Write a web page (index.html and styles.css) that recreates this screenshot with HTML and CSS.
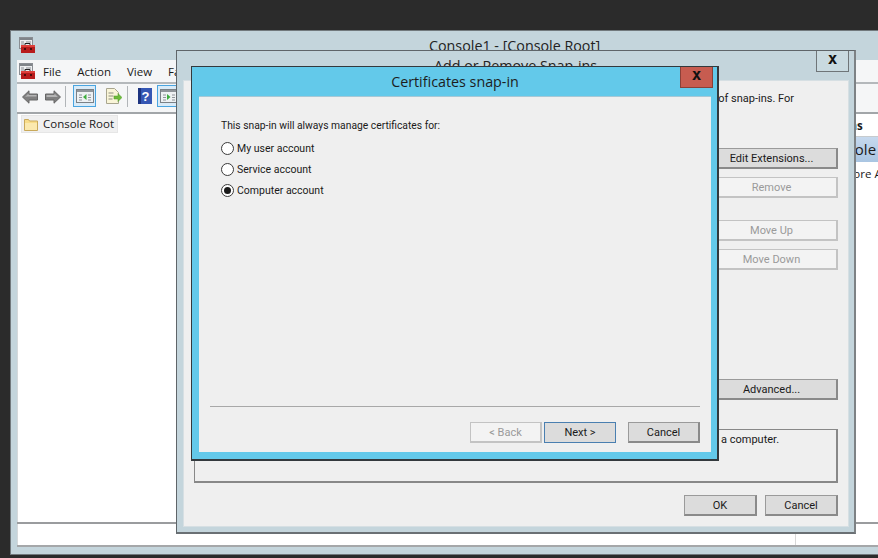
FILE: index.html
```html
<!DOCTYPE html>
<html lang="en">
<head>
<meta charset="utf-8">
<title>Certificates snap-in</title>
<link rel="stylesheet" href="styles.css">
</head>
<body>
<svg class="defs" width="0" height="0" aria-hidden="true">
  <symbol id="mmc" viewBox="0 0 16 16">
    <rect x="0.500" y="0.500" width="13" height="11" fill="#eceef0" stroke="#8a8e93"/>
    <rect x="1" y="1" width="12" height="2" fill="#7f8489"/>
    <path d="M2 5h3M2 7h3M2 9h3M7 5h5" stroke="#8a8e93"/>
    <path d="M6 8.500v-2h5v2" fill="none" stroke="#222"/>
    <rect x="2" y="8" width="14" height="8" fill="#b81c1c"/>
    <rect x="2" y="8" width="14" height="2" fill="#dd3f3a"/>
    <rect x="5" y="11" width="2" height="2" fill="#4a0d0d"/>
    <rect x="11" y="11" width="2" height="2" fill="#4a0d0d"/>
  </symbol>
  <symbol id="paneicon" viewBox="0 0 18 14">
    <rect x="0.500" y="0.500" width="17" height="13" fill="#eef1f3" stroke="#7b8186"/>
    <rect x="1" y="1" width="16" height="2" fill="#8f959a"/>
    <path d="M3 6h3M3 8.500h3M3 11h3M12 6h3M12 8.500h3M12 11h3" stroke="#8f959a"/>
  </symbol>
</svg>

<section class="window main-window">
  <header class="main-title">
    <svg class="icon16" aria-hidden="true"><use href="#mmc"/></svg>
    <h1 class="main-title-text">Console1 - [Console Root]</h1>
  </header>
  <div class="client">
    <nav class="menubar">
      <svg class="icon16 menu-icon" aria-hidden="true"><use href="#mmc"/></svg>
      <span class="menu-item">File</span>
      <span class="menu-item">Action</span>
      <span class="menu-item">View</span>
      <span class="menu-item">Favorites</span>
    </nav>
    <div class="toolbar">
      <svg class="arrow" viewBox="0 0 16 14" aria-hidden="true"><path d="M0.500 7 7 0.800v3.200h8.500v6H7v3.200z" fill="#808080" stroke="#666"/><path d="M3 7 6.500 3.500V5h8v1.500H5z" fill="#b4b4b4"/></svg>
      <svg class="arrow arrow-next" viewBox="0 0 16 14" aria-hidden="true"><path d="M15.500 7 9 0.800v3.200H0.500v6H9v3.200z" fill="#808080" stroke="#666"/><path d="M1.500 5h8V3.500L13 7H1.500z" fill="#b4b4b4"/></svg>
      <span class="tool-sep sep-a"></span>
      <span class="tool-btn">
        <svg class="pane-svg" viewBox="0 0 18 14" aria-hidden="true"><use href="#paneicon"/><path d="M10.500 5v6L7 8z" fill="#3fae3f"/></svg>
      </span>
      <svg class="doc" viewBox="0 0 17 17" aria-hidden="true"><path d="M1.500 0.500h8l4 4v11h-12z" fill="#f9f5d8" stroke="#a9a68f"/><path d="M3.500 5h5M3.500 8h5M3.500 11h4" stroke="#8d8d80"/><path d="M9 8h4V5.500l4 4-4 4V11H9z" fill="#6dbb3a" stroke="#4d9a24" stroke-width="0.500"/></svg>
      <span class="tool-sep sep-b"></span>
      <svg class="help" viewBox="0 0 14 16" aria-hidden="true"><rect width="14" height="16" fill="#3557b4"/><rect x="0" width="3" height="16" fill="#1d3480"/><text x="7.500" y="13" class="help-mark">?</text></svg>
      <span class="tool-btn tool-btn-b">
        <svg class="pane-svg" viewBox="0 0 18 14" aria-hidden="true"><use href="#paneicon"/><path d="M7 5v6l3.500-3z" fill="#3fae3f"/></svg>
      </span>
    </div>
    <div class="panes">
      <div class="tree">
        <div class="tree-item">
          <svg class="folder" viewBox="0 0 14 13" aria-hidden="true"><path d="M0.500 12.500V1.500h4l1 1.500h8v9.500z" fill="#f8dd8a" stroke="#c9a95a"/><path d="M1 5h12v7H1z" fill="#fbe9ae"/></svg>
          <span>Console Root</span>
        </div>
      </div>
      <aside class="actions">
        <div class="actions-head">Actions</div>
        <div class="actions-row">Console Root</div>
        <div class="actions-more">More Actions</div>
      </aside>
    </div>
    <footer class="status"><span class="status-cell"></span></footer>
  </div>
</section>

<section class="window dialog-addremove">
  <header class="dlg-title">
    <h2 class="dlg-title-text">Add or Remove Snap-ins</h2>
    <span class="close close-plain">x</span>
  </header>
  <div class="dlg-client">
    <p class="intro">of snap-ins. For</p>
    <div class="side-buttons">
      <span class="btn btn-wide">Edit Extensions...</span>
      <span class="btn btn-wide btn-off">Remove</span>
      <span class="btn btn-wide btn-off gap-up">Move Up</span>
      <span class="btn btn-wide btn-off gap-down">Move Down</span>
      <span class="btn btn-wide gap-adv">Advanced...</span>
    </div>
    <div class="info-box"><span>a computer.</span></div>
    <div class="dlg-foot">
      <span class="btn">OK</span>
      <span class="btn">Cancel</span>
    </div>
  </div>
</section>

<section class="window dialog-snapin">
  <header class="dlg-title snapin-title">
    <h2 class="snapin-title-text">Certificates snap-in</h2>
    <span class="close close-red">x</span>
  </header>
  <div class="snapin-client">
    <p class="lead">This snap-in will always manage certificates for:</p>
    <div class="radios">
      <div class="radio-row"><span class="radio"></span><span>My user account</span></div>
      <div class="radio-row"><span class="radio"></span><span>Service account</span></div>
      <div class="radio-row"><span class="radio radio-on"></span><span>Computer account</span></div>
    </div>
    <div class="wizard-foot">
      <span class="btn btn-wiz btn-off btn-back">&lt; Back</span>
      <span class="btn btn-wiz btn-default">Next &gt;</span>
      <span class="btn btn-wiz btn-cancel">Cancel</span>
    </div>
  </div>
</section>
</body>
</html>
```

FILE: styles.css
```css
* { box-sizing: border-box; }
html, body { margin: 0; padding: 0; }
body {
  width: 878px;
  height: 558px;
  overflow: hidden;
  position: relative;
  background: #2b2b2b;
  font-family: "Open Sans", "Noto Sans", sans-serif;
  font-size: 11.5px;
  color: #1a1a1a;
}
h1, h2, p { margin: 0; font-weight: 400; }
.defs { position: absolute; }
.icon16 { width: 16px; height: 16px; display: block; flex: none; }

.window { position: absolute; display: flex; flex-direction: column; }

/* Main console window */
.main-window {
  left: 10px; top: 30px; width: 868px; height: 525px;
  background: #c4d5dc;
  border: 1px solid #72797d;
  border-right: 0;
  padding-left: 6px;
}
.main-title { height: 29px; position: relative; padding: 6px 0 0 2px; flex: none; }
.main-title-text { position: absolute; left: 412px; top: 5px; font-size: 14.3px; white-space: nowrap; color: #222; }
.client { display: flex; flex-direction: column; height: 487px; background: #fff; }
.menubar {
  height: 24px; flex: none; display: flex; align-items: center;
  background: #f5f6f7; border-bottom: 2px solid #b4b8bb;
  padding: 0 0 0 2px; gap: 16px; white-space: nowrap; overflow: hidden;
}
.menu-icon { margin-right: -8px; }
.toolbar {
  height: 30px; flex: none; display: flex; align-items: center;
  background: #f5f6f7; border-bottom: 2px solid #a2a6a9;
  padding: 0 0 4px 5px;
}
.arrow { width: 16px; height: 14px; flex: none; margin-top: 2px; }
.arrow-next { margin-left: 7px; }
.tool-sep { width: 1px; height: 21px; background: #b1b5b8; flex: none; }
.sep-a { margin-left: 4px; }
.sep-b { margin-left: 5px; }
.tool-btn {
  width: 23px; height: 22px; flex: none; margin-left: 7px;
  display: flex; align-items: center; justify-content: center;
  background: #d9ebf8; border: 1px solid #4aa5e0;
}
.tool-btn-b { margin-left: 5px; }
.pane-svg { width: 18px; height: 14px; }
.doc { width: 17px; height: 17px; flex: none; margin-left: 9px; }
.help { width: 14px; height: 16px; flex: none; margin-left: 10px; }
.help-mark { font: 700 13px "Liberation Sans", sans-serif; fill: #fff; text-anchor: middle; }

.panes { flex: 1; display: flex; min-height: 0; border-bottom: 2px solid #9a9c9e; }
.tree { flex: 1; padding: 1px 0 0 3px; border-left: 1px solid #d5d9db; }
.tree-item {
  width: 97px; height: 18px; display: flex; align-items: center; gap: 5px;
  background: #f0f0f0; border: 1px solid #e6e6e6; padding: 0 0 2px 2px; white-space: nowrap;
}
.folder { width: 14px; height: 13px; flex: none; margin-top: 2px; }
.actions { width: 73px; overflow: hidden; white-space: nowrap; }
.actions-head { height: 23px; padding: 4px 0 0 15px; font-weight: 700; border-bottom: 1px solid #c7cbce; }
.actions-row {
  height: 25px; padding: 2px 0 0 15px; font-size: 15px;
  background: linear-gradient(#c6d9ee, #a9c5e2);
}
.actions-more { padding: 4px 0 0 38px; }
.status { height: 23px; flex: none; display: flex; border-bottom: 2px solid #a5a7a9; }
.status-cell { width: 779px; border-right: 1px solid #d8d8d8; border-left: 1px solid #d5d9db; }

/* Dialogs */
.dialog-addremove {
  left: 176px; top: 50px; width: 680px; height: 484px;
  background: #c4d5dc; border: 1px solid #5f6569; border-right: 2px solid #7d8285; border-bottom: 2px solid #6a7074;
  padding: 0 5px 5px 6px;
}
.dlg-title { height: 29px; flex: none; position: relative; }
.dlg-title-text { position: absolute; left: 251px; top: 5px; font-size: 14.3px; white-space: nowrap; color: #222; }
.close {
  position: absolute; display: flex; align-items: center; justify-content: center;
  width: 33px; height: 21px;
  font: 700 16px/1 "DejaVu Sans Mono", "Liberation Mono", monospace; color: #111;
  padding-bottom: 4px;
}
.close-plain { right: 0; top: 0; border: 1px solid #6f7578; border-top: 0; background: #c9dae0; }
.close-red { right: -2px; top: 0; background: #c75c50; border: 1px solid #8b4038; border-top: 0; }

.dlg-client {
  flex: 1; display: flex; flex-direction: column;
  background: #efefef; border: 1px solid #d6dfe3; padding: 0 10px 9px 10px; min-height: 0;
  font-family: Roboto, "Open Sans", sans-serif; font-size: 11px;
}
.intro { text-align: right; padding: 11px 44px 0 0; height: 67px; }
.side-buttons { display: flex; flex-direction: column; align-items: flex-end; }
.btn {
  width: 73px; height: 21px; flex: none; display: flex; align-items: center; justify-content: center;
  background: #dcdcdc; border: 2px solid #8c8c8c; border-width: 1px 2px 2px 1px; border-color: #9a9a9a #8a8a8a #8a8a8a #9a9a9a;
  font-family: Roboto, "Open Sans", sans-serif; font-size: 11px;
}
.btn-wide { width: 132px; margin-bottom: 8px; }
.btn-off { background: #f3f3f3; border-color: #c3c3c3; color: #9a9a9a; }
.gap-up { margin-top: 14px; }
.gap-down { margin-top: 0; }
.gap-adv { margin-top: 101px; margin-bottom: 0; }
.info-box {
  margin-top: 29px; height: 54px; border: 1px solid #888; border-width: 1px 2px 2px 1px;
  padding: 3px 0 0 526px; flex: none;
}
.dlg-foot { display: flex; justify-content: flex-end; gap: 8px; margin-top: 12px; }

/* Snap-in wizard */
.dialog-snapin {
  left: 191px; top: 66px; width: 528px; height: 395px;
  background: #63c9ea; border: 1px solid #33393d; border-width: 1px 2px 2px 1px;
  padding: 0 6px 7px 7px;
}
.snapin-title { height: 29px; }
.snapin-title-text { text-align: center; line-height: 30px; font-size: 14.3px; color: #1d1d1d; }
.snapin-client {
  flex: 1; display: flex; flex-direction: column;
  background: #efefef; border-top: 1px solid #a6c8d6; padding: 21px 11px 9px 22px; min-height: 0;
  font-family: Roboto, "Open Sans", sans-serif; font-size: 10.5px;
}
.lead { height: 20px; line-height: 16px; font-size: 10.300px; }
.radios { display: flex; flex-direction: column; }
.radio-row { height: 21px; display: flex; align-items: center; gap: 3px; }
.radio { width: 13px; height: 13px; border-radius: 50%; border: 1px solid #3a3a3a; background: #fff; flex: none; position: relative; }
.radio-on::after { content: ""; position: absolute; left: 2px; top: 2px; width: 7px; height: 7px; border-radius: 50%; background: #1a1a1a; }
.wizard-foot {
  margin: auto 0 0 -11px; border-top: 1px solid #a8a8a8; padding-top: 15px;
  display: flex; justify-content: flex-end;
}
.btn-wiz { width: 72px; height: 21px; }
.btn-back { margin-right: 2px; }
.btn-default { border-color: #4a7fb0; border-width: 1px; }
.btn-cancel { margin-left: 12px; }
```
